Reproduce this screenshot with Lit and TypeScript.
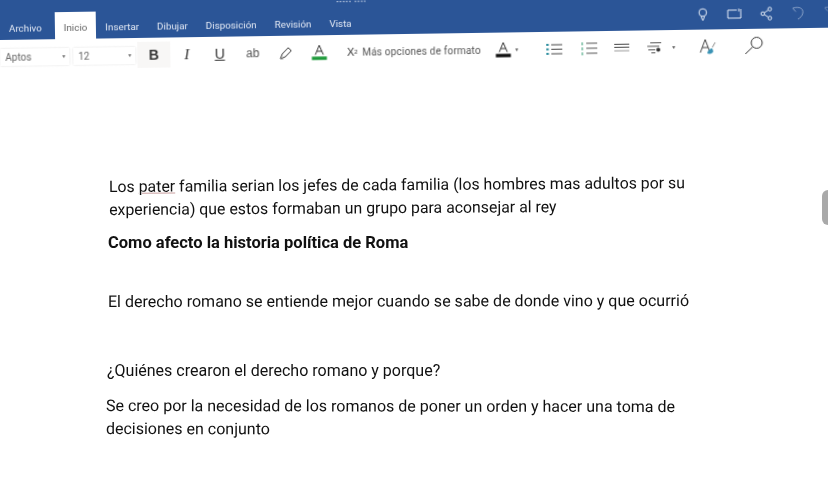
import { LitElement, html, css, svg } from "lit";
import { customElement } from "lit/decorators.js";

const ic = (w: number, h: number, body: unknown) =>
  html`<svg width=${w} height=${h} viewBox="0 0 ${w} ${h}" fill="none" stroke="currentColor" stroke-width="1">${body}</svg>`;

const lamp = ic(18, 18, svg`<circle cx="9" cy="7" r="3.800"/><path d="M7.500 11l1 3.500h1l1-3.500"/>`);
const square = ic(18, 18, svg`<path d="M2 5h9M15 4v9H2V5M13 3.500v3" />`);
const share = ic(18, 18, svg`<circle cx="12" cy="4.500" r="1.800"/><circle cx="5" cy="9" r="1.800"/><circle cx="12" cy="13.500" r="1.800"/><path d="M6.500 8l4-2.500M6.500 10l4 2.500"/>`);
const undo = ic(18, 18, svg`<path d="M3 4l3 3.500M3 4c6-2 11 0 10 5-.5 3-3 5-5 6"/>`);
const pen = ic(16, 16, svg`<path d="M2 14l2-5 6-6 3 3-6 6z"/><path d="M2 14h3" stroke="#999"/>`);
const fontA = (c: string) => ic(18, 18, svg`<path d="M5 11.500L9 2l4 9.500M6.500 8h5"/><path d="M1.500 15h15" stroke=${c} stroke-width="3.400"/>`);
const bullets = ic(18, 14, svg`<path d="M6 3h11M6 7.500h11M6 12h11" stroke="#444"/><path d="M1 3h2.500M1 7.500h2.500M1 12h2.500" stroke="#2f8fa0" stroke-width="2"/>`);
const numbers = ic(18, 14, svg`<path d="M6 2h11M6 7h11M6 12h11" stroke="#555"/><path d="M2 1v3M2 6v3M2 11v3" stroke="#2f9a70"/>`);
const align = ic(18, 10, svg`<path d="M1 1.500h15M1 4.500h15" stroke="#444"/><path d="M1 8h15" stroke="#999"/>`);
const styles = ic(18, 12, svg`<path d="M4 1.500h11M1 5h12M2 8.500h7M5 11.500h4" stroke="#555"/><circle cx="12" cy="8.500" r="2" fill="#333" stroke="none"/>`);
const stylesA = ic(20, 18, svg`<path d="M2 15L7 2l4 11M4 10h6" stroke="#444"/><path d="M9 16c0-3 3-5 5-5l1 3c-1 2-3 3-6 2z" fill="#3a93b5" stroke="none"/><path d="M14 10l3-5" stroke="#888"/>`);
const search = ic(20, 20, svg`<circle cx="12.500" cy="7" r="5.500"/><path d="M8.500 11L1 18"/>`);

@customElement("app-root")
export class AppRoot extends LitElement {
  static styles = css`
    :host { display: block; width: 828px; height: 483px; overflow: hidden; background: #fff; position: relative; font-family: "Roboto", "Liberation Sans", sans-serif; color: #222; }
    .chrome { width: 860px; height: 72px; margin-left: -10px; transform-origin: 10px 40px; transform: rotate(-0.85deg); filter: blur(0.4px); }
    .blue { background: #2b5597; height: 46px; margin-top: -6px; display: flex; align-items: flex-end; position: relative; padding-left: 10px; box-sizing: border-box; }
    .title { position: absolute; left: 347px; top: 11px; color: #e6ecf6; font-size: 5px; line-height: 5px; letter-spacing: 1.300px; font-weight: 700; }
    .tabs { display: flex; align-items: flex-end; height: 100%; font-size: 9.800px; color: #e3e9f4; }
    .tab { padding: 0 9px 6px; white-space: nowrap; }
    .tab.active { background: #fff; color: #666; height: 27px; box-sizing: border-box; display: flex; align-items: flex-end; padding: 0 9px 6px; margin-left: 4px; }
    .right { margin-left: auto; display: flex; gap: 14px; padding: 0 10px 6px 0; color: #e4ebf6; }
    .right svg:last-child { opacity: 0.35; }
    .right svg:nth-last-child(2) { opacity: 0.5; }
    .tools { display: flex; align-items: center; height: 32px; padding: 2px 0 0 10px; box-sizing: border-box; font-size: 9.500px; color: #555; }
    .box { width: 69px; height: 17px; box-shadow: 0 0 2px #ddd; display: flex; align-items: center; justify-content: space-between; padding: 0 3px 0 5px; box-sizing: border-box; color: #666; font-size: 10px; flex: none; }
    .box + .box { width: 62px; margin-left: 4px; margin-right: 2px; }
    .caret { font-size: 5px; color: #666; }
    .cell { width: 33px; height: 26px; display: flex; align-items: center; justify-content: center; flex: none; color: #333; font-size: 14px; font-family: "Liberation Sans", sans-serif; }
    .b { background: #f8f7f6; font-weight: 700; }
    .i { font-family: "Liberation Serif", serif; font-style: italic; font-size: 15px; }
    .u { text-decoration: underline; }
    .ab { font-size: 12px; color: #555; }
    .w22 { width: 22px; }
    .w36 { width: 36px; margin-left: 12px; }
    .w42 { width: 42px; margin-left: 6px; }
    .w50 { width: 50px; }
    .caretcell { width: 10px; justify-content: flex-start; font-size: 5px; color: #555; }
    .x { width: 20px; margin-left: 7px; font-size: 11px; }
    .x sub { font-size: 6px; }
    .more { width: 130px; font-size: 10px; color: #555; letter-spacing: 0.2px; white-space: nowrap; }
    .doc { padding-top: 109px; filter: blur(0.35px); font-size: 16px; line-height: 23px; color: #111; }
    p { margin: 0; white-space: nowrap; }
    .p1 { margin-left: 109px; font-size: 15.850px; transform: rotate(-0.38deg); transform-origin: 0 12px; }
    .p2 { margin: 10px 0 0 108px; font-weight: 700; font-size: 16.500px; }
    .p3 { margin: 36px 0 0 108px; font-size: 16.050px; transform: rotate(-0.1deg); transform-origin: 0 12px; }
    .p4 { margin: 46px 0 0 107px; }
    .p5 { margin: 12px 0 0 106px; transform: rotate(0.1deg); transform-origin: 0 12px; }
    .pill { position: absolute; left: 822px; top: 190px; width: 12px; height: 35px; border-radius: 6px; background: #a9a9a9; }
    .spell { text-decoration: underline; text-decoration-color: #c9a0a0; text-decoration-thickness: 1px; }
  `;
  render() {
    return html`
      <div class="chrome">
        <div class="blue">
          <div class="title">••••• ••••</div>
          <div class="tabs">
            <span class="tab">Archivo</span><span class="tab active">Inicio</span><span class="tab">Insertar</span><span class="tab">Dibujar</span><span class="tab">Disposición</span><span class="tab">Revisión</span><span class="tab">Vista</span>
          </div>
          <div class="right">${lamp}${square}${share}${undo}${undo}</div>
        </div>
        <div class="tools">
          <div class="box">Aptos<span class="caret">▼</span></div>
          <div class="box">12<span class="caret">▼</span></div>
          <span class="cell b">B</span><span class="cell i">I</span><span class="cell u">U</span><span class="cell ab">ab</span>
          <span class="cell">${pen}</span>
          <span class="cell">${fontA("#1f9a3b")}</span>
          <span class="cell x">X<sub>2</sub></span>
          <span class="more">Más opciones de formato</span>
          <span class="cell w22">${fontA("#111")}</span><span class="cell caretcell">▼</span>
          <span class="cell w36">${bullets}</span><span class="cell">${numbers}</span><span class="cell">${align}</span><span class="cell">${styles}</span><span class="cell caretcell">▼</span>
          <span class="cell w42">${stylesA}</span><span class="cell w50">${search}</span>
        </div>
      </div>
      <div class="doc">
        <div class="p1"><p>Los <span class="spell">pater</span> familia serian los jefes de cada familia (los hombres mas adultos por su</p><p>experiencia) que estos formaban un grupo para aconsejar al rey</p></div>
        <p class="p2">Como afecto la historia política de Roma</p>
        <p class="p3">El derecho romano se entiende mejor cuando se sabe de donde vino y que ocurrió</p>
        <p class="p4">¿Quiénes crearon el derecho romano y porque?</p>
        <div class="p5"><p>Se creo por la necesidad de los romanos de poner un orden y hacer una toma de</p><p>decisiones en conjunto</p></div>
      </div>
      <div class="pill"></div>
    `;
  }
}
